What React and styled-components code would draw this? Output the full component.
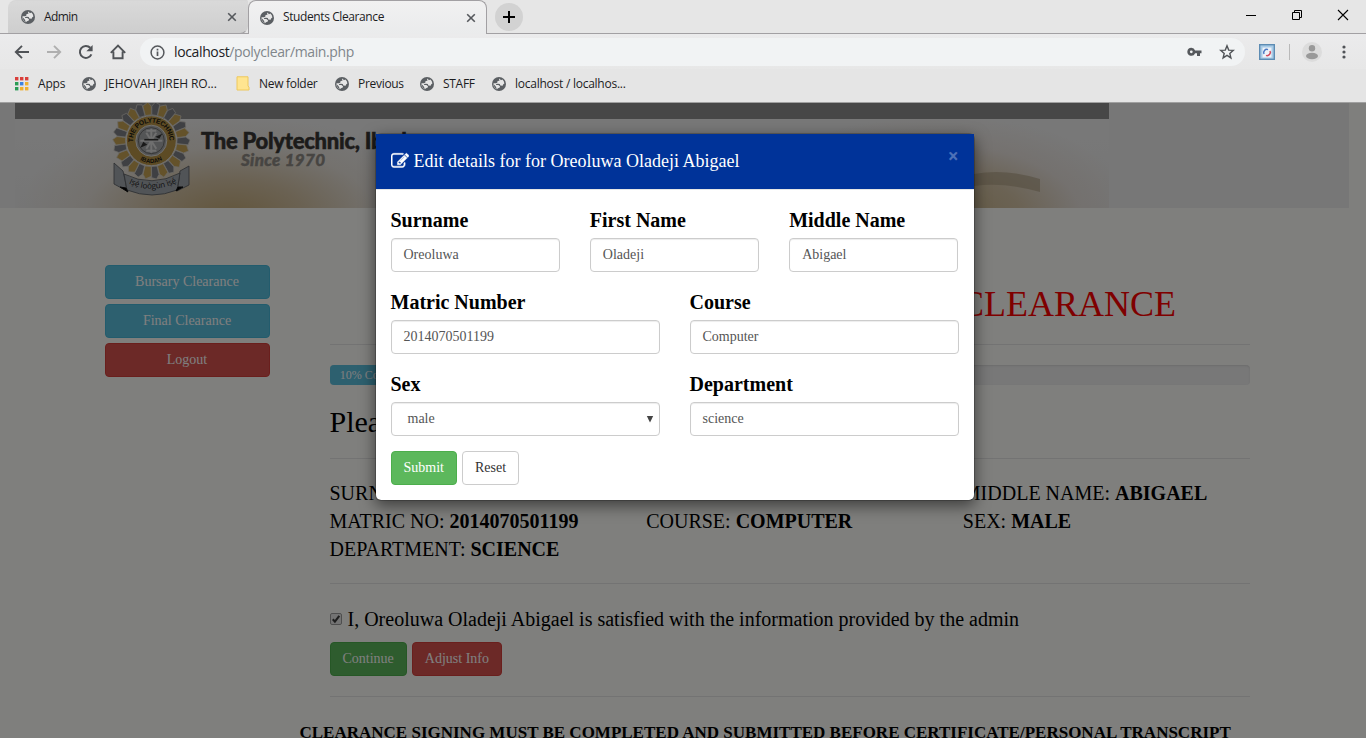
import React from "react";
import styled, { createGlobalStyle } from "styled-components";

const Global = createGlobalStyle`
  *, *::before, *::after { box-sizing: border-box; }
  html, body { margin: 0; height: 100%; overflow: hidden; }
  body { font-family: "Liberation Serif", "Times New Roman", serif; font-size: 14px; line-height: 20px; color: #000; }
`;

const ui = `"Open Sans", "Noto Sans", sans-serif`;

/* ---------- browser window ---------- */
const Window = styled.div`
  width: 1366px; height: 738px; display: flex; flex-direction: column; overflow: hidden; background: #e6e6e6;
`;
const TabStrip = styled.div`
  height: 34px; flex: none; display: flex; padding-left: 8px;
  background: linear-gradient(#e6e6e6, #e6e6e6 33px, #a2a0a3 33px);
`;
const Tab = styled.div`
  width: ${p => (p.$active ? 239 : 240)}px; height: 34px;
  padding: 0 10px 0 ${p => (p.$active ? 11 : 12)}px;
  display: flex; align-items: center; gap: 8px;
  font: 12px/32px ${ui}; color: #1c1c1e;
  border: 1px solid ${p => (p.$active ? "#a2a0a3" : "transparent")};
  border-top-color: ${p => (p.$active ? "#a2a0a3" : "#d6d6d6")};
  border-bottom: ${p => (p.$active ? "0" : "1px solid #a2a0a3")};
  border-radius: ${p => (p.$active ? "8px 8px 0 0" : "8px 0 8px 0")};
  background: ${p => (p.$active ? "linear-gradient(#f1f1f1, #eaebec)" : "linear-gradient(#d9d9d9, #cecece)")};
  svg { flex: none; }
`;
const TabTitle = styled.span`
  flex: 1; letter-spacing: ${p => p.$track || 0}px; white-space: nowrap; padding-left: 1px; margin-top: -1px;
`;
const NewTab = styled.div`
  width: 28px; height: 28px; margin: 3px 0 0 8px; border-radius: 50%; background: #d2d2d2;
  display: flex; align-items: center; justify-content: center;
`;
const Controls = styled.div`
  margin-left: auto; display: flex; align-items: center; gap: 34px; padding: 0 17px 5px 0;
`;
const Toolbar = styled.div`
  height: 35px; flex: none; display: flex; align-items: center; padding: 1px 13px 0 14px;
  background: linear-gradient(#ebebec, #e7e7e7);
`;
const NavIcons = styled.div`
  display: flex; gap: 16px; width: 126px;
`;
const Omnibox = styled.div`
  width: 1105px; height: 28px; border-radius: 14px; background: #f1f3f4; display: flex; align-items: center;
  padding: 0 10px; font: 14px/28px ${ui}; color: #202124;
`;
const Url = styled.span`
  flex: 1; margin-left: 9px; letter-spacing: ${p => p.$track}px;
  span { color: #80868b; }
`;
const OmniIcons = styled.div`display: flex; gap: 17px; align-items: center;`;
const Extensions = styled.div`
  display: flex; align-items: center; margin-left: 14px;
`;
const Divider = styled.div`width: 1px; height: 16px; background: #b9b9b9; margin: 0 12px 0 14px;`;
const Avatar = styled.div`
  width: 20px; height: 20px; border-radius: 50%; overflow: hidden; background: #dcdcdc; margin-right: 20px;
  svg { display: block; }
`;
const Bookmarks = styled.div`
  height: 34px; flex: none; display: flex; align-items: center; padding: 0 0 4px 15px;
  font: 12px/30px ${ui}; color: #1c1c1e; border-bottom: 1px solid #a0a0a0; background: #e5e5e5;
`;
const Bookmark = styled.div`
  width: ${p => p.$w}px; display: flex; align-items: center; gap: 9px; white-space: nowrap;
  letter-spacing: ${p => p.$track || 0}px;
  svg { flex: none; }
`;

/* ---------- web page ---------- */
const Viewport = styled.div`
  position: relative; flex: 1; overflow: hidden; background: #fffffb;
`;
const Masthead = styled.div`
  width: 1349px; height: 105px; padding-left: 15px; background: #efefef;
`;
const Banner = styled.div`
  width: 1094px; height: 105px; position: relative; overflow: hidden;
  background:
    linear-gradient(#8f8f8f, #8f8f8f) 0 0 / 100% 16px no-repeat,
    radial-gradient(ellipse 215px 100px at 215px 112px, #c5ab78 0, rgba(205,182,142,.75) 35%, rgba(222,208,188,.35) 68%, rgba(240,240,240,0) 100%),
    radial-gradient(ellipse 200px 100px at 925px 112px, #c6b184 0, rgba(208,187,150,.8) 40%, rgba(225,210,198,.4) 70%, rgba(240,240,240,0) 100%),
    linear-gradient(#f2f2f2, #ececec);
`;
const Art = styled.svg`display: block;`;

const Main = styled.div`display: flex; padding: 0 99px 0 104.5px; width: 1349px;`;
const Sidebar = styled.nav`
  width: 165px; flex: none; margin-right: 60px; padding-top: 57px; display: flex; flex-direction: column; gap: 5px;
`;
const tones = {
  info: ["#5bc0de", "#46b8da", "#fff"],
  danger: ["#d9534f", "#d43f3a", "#fff"],
  success: ["#5cb85c", "#4cae4c", "#fff"],
  plain: ["#fff", "#ccc", "#333"],
};
const Button = styled.button`
  height: 34px; padding: 0 12px; border-radius: 4px; font: 14px/20px "Liberation Serif", serif; white-space: nowrap;
  background: ${p => tones[p.$tone][0]}; border: 1px solid ${p => tones[p.$tone][1]}; color: ${p => tones[p.$tone][2]};
`;
const Content = styled.main`width: 920px; flex: none;`;
const Title = styled.h1`
  margin: 76px 73.5px 0 0; text-align: right; font-size: 36px; font-weight: 400; line-height: 40px; color: #ff0000;
`;
const Rule = styled.hr`
  margin: ${p => p.$m}; border: 0; height: 1px; background: #e6e6e6;
`;
const Progress = styled.div`
  height: 20px; border-radius: 4px; background: #f0f0f0; overflow: hidden; box-shadow: inset 0 1px 2px rgba(0,0,0,.1);
`;
const Bar = styled.div`
  width: 10%; height: 20px; background: #5bc0de; color: #fff; font-size: 12px; line-height: 20px; text-align: center; white-space: nowrap;
`;
const Prompt = styled.h2`margin: 20px 0 0; font-size: 30px; font-weight: 400; line-height: 33px;`;
const Facts = styled.div`
  width: 950px; display: grid; grid-template-columns: repeat(3, 1fr); font-size: 20px; line-height: 28px;
`;
const Agree = styled.label`
  display: flex; align-items: center; gap: 6px; font-size: 20px; line-height: 28px;
`;
const Actions = styled.div`display: flex; gap: 5px; margin-top: ${p => p.$top || 0}px;`;
const Notice = styled.p`
  margin: 0 0 0 -30px; font-size: 17px; line-height: 24px; font-weight: 700; white-space: nowrap;
`;

/* ---------- modal ---------- */
const Backdrop = styled.div`
  position: absolute; inset: 0; background: rgba(0,0,0,.5); padding: 30px 0 0 374.5px;
`;
const Dialog = styled.div`
  width: 600px; background: #fff; background-clip: padding-box; border: 1px solid rgba(0,0,0,.2); border-radius: 6px;
  box-shadow: 0 5px 15px rgba(0,0,0,.5);
`;
const DialogHeader = styled.div`
  height: 56px; padding: 0 15px 1px 15px; display: flex; align-items: center; background: #003399; color: #fff;
  border-bottom: 1px solid #e5e5e5; font-size: 18px; line-height: 26px;
  svg { margin-right: 5px; }
`;
const Close = styled.span`
  margin: -9px 0 0 auto; font: 700 19px/21px "Open Sans", sans-serif; color: #fff; opacity: .3;
`;
const Form = styled.div`padding: 14px 15px 15px;`;
const Row = styled.div`
  display: grid; grid-template-columns: repeat(${p => p.$n}, 1fr); gap: 30px; margin-bottom: 14.5px;
`;
const Field = styled.label`
  display: flex; flex-direction: column; gap: 3px; padding-top: 2px; font-size: 20px; line-height: 28.5px; font-weight: 700;
`;
const Control = styled.span`
  height: 34px; padding: 0 ${p => (p.$select ? 5 : 12)}px 0 ${p => (p.$select ? 16 : 12)}px;
  border: 1px solid #ccc; border-radius: 4px; box-shadow: inset 0 1px 1px rgba(0,0,0,.075);
  display: flex; align-items: center; justify-content: space-between;
  font-size: 14px; line-height: 20px; font-weight: 400; color: #555;
`;

const Globe = () => (
  <svg width="14" height="14" viewBox="0 0 14 14">
    <circle cx="7" cy="7" r="7" fill="#5b5f63" />
    <path d="M7.6 1.5 7 2.4 7.6 3.5 5.4 4.3 5.3 5.8 3.9 6.2 1.5 6.2A5.6 5.6 0 0 0 4.9 12.2L6 11.2 7.8 10.4 8 9.2 6.4 8 4 7.9 4.2 6.9 6 6.7 7.8 7 8.3 8.4 10.6 8.7 11.3 7.2 12.4 6.4A5.6 5.6 0 0 0 10.4 2.6L8.9 3.2Z" fill="#e6e6e6" />
    <path d="M1.6 7.2 3.6 9.2 4.9 12A5.6 5.6 0 0 1 1.6 7.2Z" fill="#5b5f63" />
  </svg>
);
const TabClose = () => (
  <svg width="10" height="10" viewBox="0 0 10 10"><path d="M1.2 1.2 8.8 8.8M8.8 1.2 1.2 8.8" stroke="#55585c" strokeWidth="1.6" /></svg>
);
const Folder = () => (
  <svg width="14" height="15" viewBox="0 0 14 15">
    <path d="M1 .8H12V10L13 11.2V14H1Z" fill="#ffe590" stroke="#eec85c" />
  </svg>
);
const AppsIcon = () => (
  <svg width="14" height="14" viewBox="0 0 14 14">
    {["#d93f3a", "#d93f3a", "#d93f3a", "#2a9c55", "#3c82e0", "#efb02e", "#2a9c55", "#efb02e", "#efb02e"].map((c, i) => (
      <rect key={i} x={(i % 3) * 5} y={Math.floor(i / 3) * 5} width="3.4" height="3.4" fill={c} />
    ))}
  </svg>
);
const EditIcon = () => (
  <svg width="18" height="18" viewBox="0 0 1792 1792" fill="#fff" stroke="#fff" strokeWidth="45">
    <path d="M888 1184l116-116-152-152-116 116v56h96v96h56zm440-720q-16-16-33 1l-350 350q-17 17-1 33t33-1l350-350q17-17 1-33zm80 594v190q0 119-84.5 203.5t-203.5 84.5h-832q-119 0-203.5-84.5t-84.5-203.5v-832q0-119 84.5-203.5t203.5-84.5h832q63 0 117 25 15 7 18 23 3 17-9 29l-49 49q-14 14-32 8-23-6-45-6h-832q-66 0-113 47t-47 113v832q0 66 47 113t113 47h832q66 0 113-47t47-113v-126q0-13 9-22l64-64q15-15 35-7t20 29zm-96-738l288 288-672 672h-288v-288zm444 132l-92 92-288-288 92-92q28-28 68-28t68 28l152 152q28 28 28 68t-28 68z" />
  </svg>
);

const rays = Array.from({ length: 13 }, (_, i) => (i * 360) / 13);
const BannerArt = () => (
  <Art width="1094" height="105" viewBox="15 103 1094 105">
    <defs>
      <path id="ringTop" d="M133.4 144a18.2 18.2 0 1 1 35.8 0" />
      <path id="ringBottom" d="M129.3 141a22 22 0 0 0 44 0" />
      <path id="motto" d="M126 182Q152 196 180 181" />
    </defs>
    <g transform="translate(151.3 140.7)">
      {rays.map(a => (
        <g key={a} transform={`rotate(${a})`} stroke="#d5d2ca" strokeWidth=".7">
          <path d="M-6-25 0-26 0-34.5-3.5-38.5-8.5-34.5Z" fill="#c9a555" />
          <path d="M.5-26 6-25 8.5-36 4-38.5.5-34.5Z" fill="#7f8087" />
        </g>
      ))}
      <circle r="25" fill="#bb9648" stroke="#e4e2dc" />
      <circle r="15.5" fill="#a9abad" stroke="#e4e2dc" />
      <circle r="13" fill="none" stroke="#555" strokeWidth=".7" />
      <path d="M0-12V12M-11 0H11M-5-8 5 8M5-8-5 8M-5-10H5M-5 10H5" stroke="#dedede" strokeWidth="2" fill="none" />
      <path d="M4-4 11-7 8-2ZM-4 4-11 7-8 1Z" fill="#333" />
      <path d="M-7-1H7" stroke="#333" strokeWidth="1.6" />
    </g>
    <g fontFamily="Liberation Sans, sans-serif" fontWeight="700" fill="#1c1a12">
      <text fontSize="6.8"><textPath href="#ringTop" startOffset="2" textLength="58">THE POLYTECHNIC</textPath></text>
      <text fontSize="6"><textPath href="#ringBottom" startOffset="50%" textAnchor="middle">IBADAN</textPath></text>
    </g>
    <g fill="#a3a9af" stroke="#55595e" strokeWidth=".8">
      <path d="M114 163 123 171 125 180 127 191 114 184Z" />
      <path d="M189 166 180 171 179 180 177 191 189 185Z" />
      <path d="M124 174Q152 188 180 173L177 190Q152 200 127 190Z" />
    </g>
    <path d="M120 187 128 192 126 188ZM183 187 176 191 178 187Z" fill="#000" stroke="#111" />
    <text fontFamily="Open Sans, sans-serif" fontSize="8" fill="#222"><textPath href="#motto" startOffset="3" textLength="50">Iṣẹ́ loògùn ìṣẹ́</textPath></text>
    <text x="201" y="148.5" fontFamily="Lato, sans-serif" fontWeight="900" fontSize="22" fill="#383634" stroke="#383634" strokeWidth=".5" textLength="229">The Polytechnic, Ibadan</text>
    <text x="241" y="166" fontFamily="Lato, sans-serif" fontWeight="900" fontStyle="italic" fontSize="17" fill="#8e8a85" stroke="#8e8a85" strokeWidth=".4" textLength="84">Since 1970</text>
    <path d="M974 174Q1005 168 1040 179V192Q1005 182 974 186Z" fill="#ab9d80" opacity=".6" />
  </Art>
);

const TextField = ({ label, value, select }) => (
  <Field>
    {label}
    <Control $select={select}>
      {value}
      {select && <svg width="8" height="8" viewBox="0 0 8 8"><path d="M.8 1H7.2L4 7.4Z" fill="#444" /></svg>}
    </Control>
  </Field>
);

export default function App() {
  return (
    <Window>
      <Global />
      <TabStrip>
        <Tab><Globe /><TabTitle $track={-0.6}>Admin</TabTitle><TabClose /></Tab>
        <Tab $active><Globe /><TabTitle $track={-0.4}>Students Clearance</TabTitle><TabClose /></Tab>
        <NewTab><svg width="12" height="12" viewBox="0 0 12 12"><path d="M6 0V12M0 6H12" stroke="#000" strokeWidth="2" /></svg></NewTab>
        <Controls>
          <svg width="12" height="12" viewBox="0 0 12 12"><path d="M1 6.5H11" stroke="#000" /></svg>
          <svg width="12" height="12" viewBox="0 0 12 12"><path d="M1.5 3.5H8.5V10.5H1.5ZM3.5 3.5V1.5H10.5V8.5H8.5" fill="none" stroke="#000" /></svg>
          <svg width="12" height="12" viewBox="0 0 12 12"><path d="M1 1 11 11M11 1 1 11" stroke="#000" strokeWidth="1.1" /></svg>
        </Controls>
      </TabStrip>
      <Toolbar>
        <NavIcons>
          <svg width="16" height="16" viewBox="0 0 16 16"><path d="M15 8H2M8 1.8 1.8 8 8 14.2" fill="none" stroke="#505357" strokeWidth="1.9" /></svg>
          <svg width="16" height="16" viewBox="0 0 16 16"><path d="M1 8H14M8 1.8 14.2 8 8 14.2" fill="none" stroke="#afafaf" strokeWidth="1.9" /></svg>
          <svg width="16" height="16" viewBox="0 0 16 16"><path d="M13.4 10.3A6 6 0 1 1 12.3 3.8" fill="none" stroke="#505357" strokeWidth="2" /><path d="M14.6 1V7.2H8.4Z" fill="#505357" /></svg>
          <svg width="16" height="16" viewBox="0 0 16 16"><path d="M.8 8.8 8 1.6 15.2 8.8M3.4 7.5V14.3H12.6V7.5" fill="none" stroke="#505357" strokeWidth="1.9" /></svg>
        </NavIcons>
        <Omnibox>
          <svg width="15" height="15" viewBox="0 0 15 15"><circle cx="7.5" cy="7.5" r="6.4" fill="none" stroke="#55585c" strokeWidth="1.5" /><path d="M7.5 6.5V11M7.5 3.7V5.4" stroke="#55585c" strokeWidth="1.7" /></svg>
          <Url $track={-0.37}>localhost<span>/polyclear/main.php</span></Url>
          <OmniIcons>
            <svg width="15" height="10" viewBox="0 0 15 10"><path fillRule="evenodd" d="M4.3.8a4 4 0 1 0 3.8 5.4H10V9H13V6.2H14.5V3.4H8.1A4 4 0 0 0 4.3.8ZM4.3 3.4a1.4 1.4 0 1 1 0 2.8 1.4 1.4 0 0 1 0-2.8Z" fill="#55585c" /></svg>
            <svg width="16" height="16" viewBox="0 0 16 16"><path d="M8 1.8 9.7 6.1 14.3 6.4 10.8 9.4 11.9 13.9 8 11.4 4.1 13.9 5.2 9.4 1.7 6.4 6.3 6.1Z" fill="none" stroke="#505357" strokeWidth="1.4" /></svg>
          </OmniIcons>
        </Omnibox>
        <Extensions>
          <svg width="16" height="16" viewBox="0 0 16 16"><rect x=".7" y=".7" width="14.6" height="14.6" fill="#a9cbe6" stroke="#5d8cb3" strokeWidth="1.4" /><rect x="3.5" y="3.5" width="9" height="10" fill="#eef2f8" /><path d="M5 10A3.2 3.2 0 0 1 9 5.6" fill="none" stroke="#4a78c2" strokeWidth="1.5" /><path d="M11 7A3.2 3.2 0 0 1 7 11.4" fill="none" stroke="#d3485a" strokeWidth="1.5" /></svg>
          <Divider />
          <Avatar><svg width="20" height="20" viewBox="0 0 20 20"><circle cx="10" cy="6.2" r="3.2" fill="#999" /><ellipse cx="10" cy="14" rx="6" ry="3.2" fill="#999" /></svg></Avatar>
          <svg width="4" height="14" viewBox="0 0 4 14" fill="#505357"><circle cx="2" cy="2" r="1.6" /><circle cx="2" cy="7" r="1.6" /><circle cx="2" cy="12" r="1.6" /></svg>
        </Extensions>
      </Toolbar>
      <Bookmarks>
        <Bookmark $w={67} $track={-0.2}><AppsIcon />Apps</Bookmark>
        <Bookmark $w={154} $track={-0.1}><Globe />JEHOVAH JIREH RO...</Bookmark>
        <Bookmark $w={99} $track={-0.3}><Folder />New folder</Bookmark>
        <Bookmark $w={85} $track={-0.3}><Globe />Previous</Bookmark>
        <Bookmark $w={72} $track={-0.3}><Globe />STAFF</Bookmark>
        <Bookmark $w={150} $track={-0.25}><Globe />localhost / localhos...</Bookmark>
      </Bookmarks>
      <Viewport>
        <Masthead><Banner><BannerArt /></Banner></Masthead>
        <Main>
          <Sidebar>
            <Button $tone="info">Bursary Clearance</Button>
            <Button $tone="info">Final Clearance</Button>
            <Button $tone="danger">Logout</Button>
          </Sidebar>
          <Content>
            <Title>STUDENTS CLEARANCE</Title>
            <Rule $m="20px 0" />
            <Progress><Bar>10% Complete</Bar></Progress>
            <Prompt>Please confirm your details</Prompt>
            <Rule $m="20px 0" />
            <Facts>
              <span>SURNAME: <b>OREOLUWA</b></span><span>FIRST NAME: <b>OLADEJI</b></span><span>MIDDLE NAME: <b>ABIGAEL</b></span>
              <span>MATRIC NO: <b>2014070501199</b></span><span>COURSE: <b>COMPUTER</b></span><span>SEX: <b>MALE</b></span>
              <span>DEPARTMENT: <b>SCIENCE</b></span>
            </Facts>
            <Rule $m="20px 0 21px" />
            <Agree>
              <svg width="12" height="12" viewBox="0 0 12 12"><rect x=".5" y=".5" width="11" height="11" rx="1.5" fill="#e6e6e6" stroke="#9c9c9c" /><path d="M2.8 6.2 4.9 8.6 9.3 2.8" fill="none" stroke="#3c3c3c" strokeWidth="2.1" /></svg>
              I, Oreoluwa Oladeji Abigael is satisfied with the information provided by the admin
            </Agree>
            <Actions $top={9}>
              <Button $tone="success">Continue</Button>
              <Button $tone="danger">Adjust Info</Button>
            </Actions>
            <Rule $m="20px 0 24px" />
            <Notice>CLEARANCE SIGNING MUST BE COMPLETED AND SUBMITTED BEFORE CERTIFICATE/PERSONAL TRANSCRIPT</Notice>
          </Content>
        </Main>
        <Backdrop>
          <Dialog>
            <DialogHeader><EditIcon />Edit details for for Oreoluwa Oladeji Abigael<Close>×</Close></DialogHeader>
            <Form>
              <Row $n={3}>
                <TextField label="Surname" value="Oreoluwa" />
                <TextField label="First Name" value="Oladeji" />
                <TextField label="Middle Name" value="Abigael" />
              </Row>
              <Row $n={2}>
                <TextField label="Matric Number" value="2014070501199" />
                <TextField label="Course" value="Computer" />
              </Row>
              <Row $n={2}>
                <TextField label="Sex" value="male" select />
                <TextField label="Department" value="science" />
              </Row>
              <Actions $top={15}>
                <Button $tone="success">Submit</Button>
                <Button $tone="plain">Reset</Button>
              </Actions>
            </Form>
          </Dialog>
        </Backdrop>
      </Viewport>
    </Window>
  );
}
